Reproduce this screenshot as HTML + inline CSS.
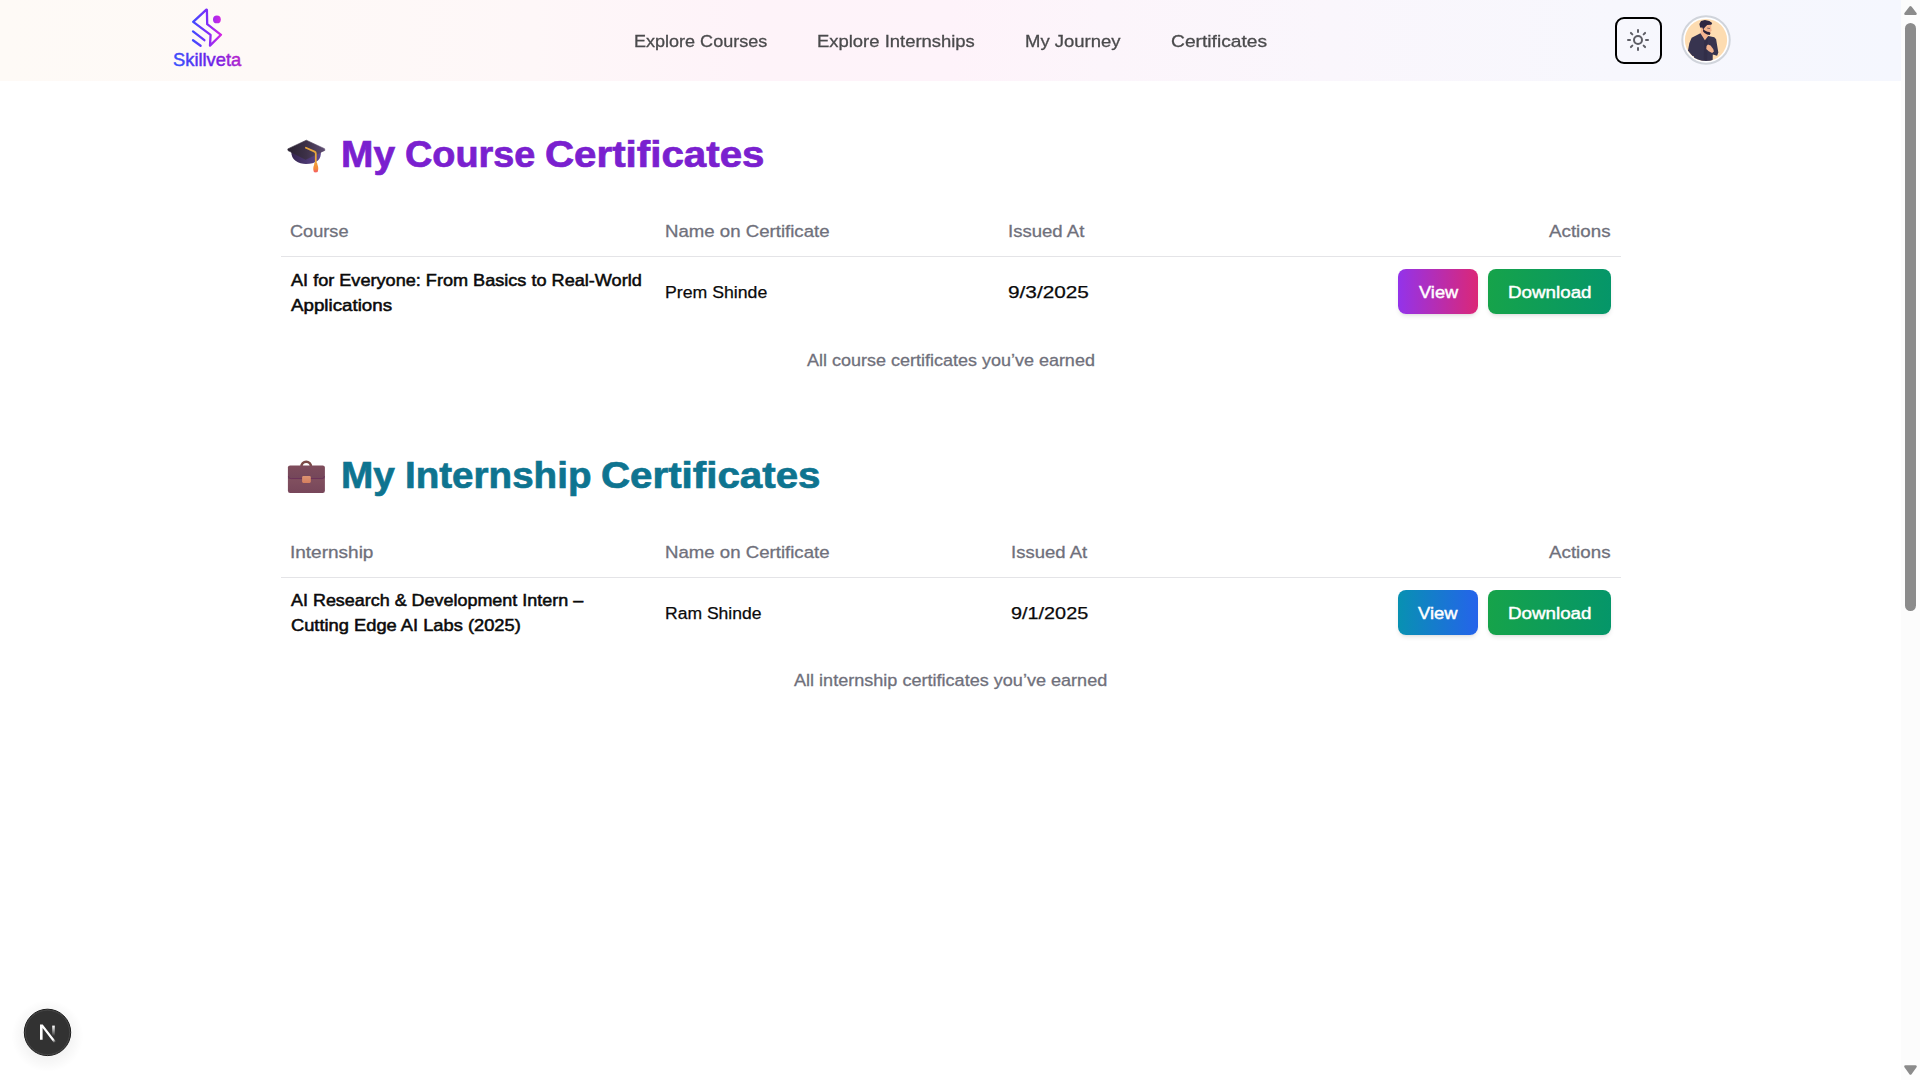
<!DOCTYPE html>
<html lang="en">
<head>
<meta charset="utf-8">
<title>Skillveta – Certificates</title>
<style>
*{box-sizing:border-box;margin:0;padding:0}
html,body{width:1920px;height:1080px;overflow:hidden;background:#fff}
body{font-family:"Liberation Sans",Arial,sans-serif;color:#0a0a0a;position:relative}
h1{font:inherit}
button{font:inherit;border:0;cursor:pointer}
.abs{position:absolute}
.t{position:absolute;white-space:nowrap;line-height:1;transform-origin:0 50%;display:block}
/* header */
#hdr{position:absolute;left:0;top:0;width:1901px;height:81px;background:linear-gradient(90deg,#fefaf6 0%,#fef9f7 14%,#fef7f8 28%,#fef3f9 40%,#fef3fa 50%,#fcf5fb 58%,#faf6fc 70%,#f7f7fd 85%,#f5f7fe 100%)}
.nav{will-change:transform;color:#4a4a4c;-webkit-text-stroke:.3px currentColor}
#theme{position:absolute;left:1615px;top:17px;width:47px;height:47px;border:2px solid #000;border-radius:9px;background:transparent}
/* headings */
.h{font-weight:700;-webkit-text-stroke:.7px currentColor}
.h1{color:#7a20cf}
.h2{color:#0e7490}
/* table */
.th{color:#6f707b;-webkit-text-stroke:.3px currentColor}
.td{color:#0a0a0a;-webkit-text-stroke:.25px currentColor}
.tdb{color:#0a0a0a;-webkit-text-stroke:.5px currentColor}
.line{position:absolute;left:281px;width:1340px;height:1px;background:#e4e4e7}
.cap{color:#6f707b;-webkit-text-stroke:.3px currentColor}
.btn{position:absolute;height:44.75px;border-radius:8px;box-shadow:0 3px 5px -1px rgba(0,0,0,.1),0 2px 3px -2px rgba(0,0,0,.09)}
.bt{color:#fff;-webkit-text-stroke:.45px currentColor}
.v1{background:linear-gradient(90deg,#9333ea,#db2777)}
.v2{background:linear-gradient(90deg,#0891b2,#2563eb)}
.dl{background:linear-gradient(90deg,#16a34a,#059669)}
#nbadge{position:absolute;left:10px;top:995px;width:80px;height:80px}
/* scrollbar */
#sb{position:absolute;left:1901px;top:0;width:19px;height:1080px;background:#fcfcfc}
#thumb{position:absolute;left:4px;top:23px;width:11px;height:588px;border-radius:5.5px;background:#8b8b8b}
</style>
</head>
<body>
<header id="hdr">

<a class="logo" aria-label="Skillveta home">
<svg class="abs" style="left:186px;top:4px" width="44" height="48" viewBox="186 4 44 48" fill="none">
  <defs>
    <linearGradient id="lg" x1="192" y1="28" x2="222" y2="28" gradientUnits="userSpaceOnUse">
      <stop offset="0" stop-color="#3b4dff"/><stop offset=".5" stop-color="#7c2dfa"/><stop offset="1" stop-color="#d926e0"/>
    </linearGradient>
  </defs>
  <path d="M206.4 9.6 L193.2 21.9 L210.6 34.9 L210 45.6 L221 34.8 L207.2 24.2 L206.9 9.8 Z" stroke="url(#lg)" stroke-width="2.3" stroke-linejoin="round" stroke-linecap="round"/>
  <path d="M193 31.4 L204.4 40.2 M193 40.2 L200.6 45.8" stroke="url(#lg)" stroke-width="2.3" stroke-linecap="round"/>
  <circle cx="216.9" cy="19.4" r="3.9" fill="url(#lg)"/>
</svg>
<svg class="t" id="brand" width="72" height="20" style="left:173.22px;top:51px;overflow:visible;transform:scaleX(1.0029)"><defs><linearGradient id="lgt" x1="0" y1="16" x2="58" y2="-12" gradientUnits="userSpaceOnUse"><stop offset="0" stop-color="#3556ff"/><stop offset=".55" stop-color="#6322ea"/><stop offset="1" stop-color="#b822cc"/></linearGradient></defs><text x="0" y="15" font-size="18.3" fill="url(#lgt)" stroke="url(#lgt)" stroke-width=".45">Skillveta</text></svg>
</a>

<nav>
<span class="t nav" id="n1" style="left:633.83px;top:33.00px;font-size:17.4px;transform:scaleX(1.0363)">Explore Courses</span>
<span class="t nav" id="n2" style="left:816.71px;top:33.00px;font-size:17.4px;transform:scaleX(1.0601)">Explore Internships</span>
<span class="t nav" id="n3" style="left:1024.91px;top:33.00px;font-size:17.4px;transform:scaleX(1.0628)">My Journey</span>
<span class="t nav" id="n4" style="left:1170.96px;top:33.00px;font-size:17.4px;transform:scaleX(1.1057)">Certificates</span>
</nav>

<button id="theme" aria-label="Toggle theme">
  <svg width="24" height="24" viewBox="0 0 24 24" fill="none" stroke="#5e5e66" stroke-width="2" stroke-linecap="round" stroke-linejoin="round" style="position:absolute;left:9px;top:9px">
    <circle cx="12" cy="12" r="4"/><path d="M12 2v2"/><path d="M12 20v2"/><path d="m4.93 4.93 1.41 1.41"/><path d="m17.66 17.66 1.41 1.41"/><path d="M2 12h2"/><path d="M20 12h2"/><path d="m6.34 17.66-1.41 1.41"/><path d="m19.07 4.93-1.41 1.41"/>
  </svg>
</button>
<svg class="abs" role="img" aria-label="User avatar" style="left:1676px;top:10px" width="60" height="60" viewBox="0 0 1080 1080">
  <defs><clipPath id="avc"><circle cx="540" cy="540" r="380"/></clipPath></defs>
  <circle cx="540" cy="540" r="427" fill="#fff" stroke="#d0d4db" stroke-width="36"/>
  <circle cx="540" cy="540" r="380" fill="#fddcb1"/>
  <g clip-path="url(#avc)">
    <path d="M450 330 L470 300 L560 280 L580 470 L520 560 L440 440 Z" fill="#f3b48f"/>
    <path d="M440 420 L520 545 L580 470 L690 490 L722 525 L762 765 L740 822 L662 800 L660 930 L320 930 L322 830 L300 832 L215 735 L240 600 L282 500 Z" fill="#37344f"/>
    <path d="M506 560 L520 545 L536 560 L572 490 L560 900 L500 900 Z" fill="#2f2c45" opacity=".6"/>
    <path d="M530 290 L565 268 L632 268 L634 330 L642 372 L622 390 L626 430 L592 446 L540 420 L500 380 L470 345 L478 310 Z" fill="#f3b48f"/>
    <path d="M486 342 L520 370 L565 390 L600 396 L620 414 L608 450 L560 442 L514 416 L488 386 Z" fill="#2b2238"/>
    <path d="M432 300 L420 250 L450 200 L520 180 L600 198 L652 236 L636 266 L562 270 L530 300 L502 332 L490 352 L470 312 L446 322 Z" fill="#2d2540"/>
    <path d="M560 318 L612 322 L610 336 L566 332 Z" fill="#2d2540" opacity=".8"/>
    <path d="M575 620 L622 640 L670 700 L682 746 L650 776 L590 742 L545 700 L550 650 Z" fill="#f3b48f"/>
  </g>
</svg>
</header>

<main>
<section>
<svg class="abs" role="img" aria-label="🎓" style="left:280px;top:132px" width="52" height="48" viewBox="280 132 52 48">
  <defs>
    <linearGradient id="gc1" x1="288" y1="0" x2="325" y2="0" gradientUnits="userSpaceOnUse"><stop offset="0" stop-color="#2a2231"/><stop offset=".5" stop-color="#3d3148"/><stop offset="1" stop-color="#5e4d72"/></linearGradient>
    <linearGradient id="gc2" x1="291" y1="0" x2="321" y2="0" gradientUnits="userSpaceOnUse"><stop offset="0" stop-color="#35254f"/><stop offset="1" stop-color="#5f4890"/></linearGradient>
    <linearGradient id="gc3" x1="0" y1="162" x2="0" y2="173" gradientUnits="userSpaceOnUse"><stop offset="0" stop-color="#f0a437"/><stop offset=".6" stop-color="#f58a3c"/><stop offset="1" stop-color="#f4526c"/></linearGradient>
  </defs>
  <path d="M291.2 151.5 C291.4 156 292.6 158.6 295.5 160.8 C298.5 163.2 302.5 163.9 306 163.9 C310.5 163.9 315 163 318 160.5 C320.4 158.4 320.9 155.5 321 151.5 Z" fill="url(#gc2)"/>
  <path d="M306.3 140.2 L324.6 148.7 L324.9 150.4 L305.6 159.4 L288 150.6 L287.8 148.9 Z" fill="url(#gc1)" stroke="url(#gc1)" stroke-width=".6" stroke-linejoin="round"/>
  <path d="M305.9 147.8 L314.6 151.6 C315.4 152 315.8 152.6 315.8 153.5 L315.8 163.5" fill="none" stroke="#e9a63c" stroke-width="1.8" stroke-linecap="round" stroke-linejoin="round"/>
  <path d="M315.7 162.4 C317.2 162.4 317.6 163.6 317.4 164.6 C318.6 167 318.4 170 317.8 171.6 C317.2 172.8 314.4 172.8 313.7 171.6 C313 169.6 313.2 166.6 314.2 164.6 C314 163.5 314.4 162.4 315.7 162.4 Z" fill="url(#gc3)"/>
</svg>
<h1><span class="t h h1" id="h1a" style="left:340.98px;top:137.00px;font-size:36.5px;transform:scaleX(1.0648)">My</span> <span class="t h h1" id="h1b" style="left:404.77px;top:137.00px;font-size:36.5px;transform:scaleX(1.0360)">Course</span> <span class="t h h1" id="h1c" style="left:544.85px;top:137.00px;font-size:36.5px;transform:scaleX(1.1038)">Certificates</span></h1>
<div class="thead"><span class="t th" id="c1" style="left:290.13px;top:223.00px;font-size:17.4px;transform:scaleX(1.0437)">Course</span><span class="t th" id="c2" style="left:665.37px;top:223.00px;font-size:17.4px;transform:scaleX(1.0705)">Name on Certificate</span><span class="t th" id="c3" style="left:1008.08px;top:223.00px;font-size:17.4px;transform:scaleX(1.0673)">Issued At</span><span class="t th" id="c4" style="left:1548.75px;top:223.00px;font-size:17.4px;transform:scaleX(1.0786)">Actions</span></div>
<div class="line" style="top:256px"></div>
<div class="trow">
<span class="t tdb" id="r1a" style="left:291.27px;top:272.00px;font-size:16.2px;transform:scaleX(1.1183)">AI for Everyone: From Basics to Real-World</span>
<span class="t tdb" id="r1b" style="left:291.24px;top:297.00px;font-size:16.2px;transform:scaleX(1.1574)">Applications</span>
<span class="t td" id="r1c" style="left:665.42px;top:284.00px;font-size:17.3px;transform:scaleX(1.0232)">Prem Shinde</span>
<span class="t td" id="r1d" style="left:1008.19px;top:284.00px;font-size:17.3px;transform:scaleX(1.2028)">9/3/2025</span>
<button class="btn v1" id="b1" style="left:1398px;top:269px;width:80px"><span class="t bt" id="bt1" style="left:21.00px;top:15.00px;font-size:17.4px;transform:scaleX(1.0499)">View</span></button>
<button class="btn dl" id="b2" style="left:1488px;top:269px;width:123px"><span class="t bt" id="bt2" style="left:19.74px;top:15.00px;font-size:17.4px;transform:scaleX(1.0800)">Download</span></button>
</div>
<span class="t cap" id="cap1" style="left:807.43px;top:352.00px;font-size:17.4px;transform:scaleX(1.0341)">All course certificates you’ve earned</span>
</section>

<section>
<svg class="abs" role="img" aria-label="💼" style="left:280px;top:452px" width="52" height="48" viewBox="280 452 52 48">
  <defs>
    <linearGradient id="gb1" x1="0" y1="465" x2="0" y2="493" gradientUnits="userSpaceOnUse"><stop offset="0" stop-color="#7f4c5b"/><stop offset=".48" stop-color="#74475a"/><stop offset=".5" stop-color="#81505f"/><stop offset="1" stop-color="#77465a"/></linearGradient>
    <linearGradient id="gb2" x1="0" y1="476" x2="0" y2="483" gradientUnits="userSpaceOnUse"><stop offset="0" stop-color="#dd9372"/><stop offset="1" stop-color="#d57f5e"/></linearGradient>
  </defs>
  <path d="M301.4 466.6 A4.8 4.8 0 0 1 311 466.6" fill="none" stroke="#7b4b47" stroke-width="2.6"/>
  <rect x="287.9" y="465.4" width="37" height="27.6" rx="2.2" fill="url(#gb1)"/>
  <path d="M288.4 476.2 C288.6 477.8 289.6 478.6 291.5 478.6 L321.3 478.6 C323.2 478.6 324.2 477.8 324.4 476.2" fill="none" stroke="#6a2f58" stroke-width=".9"/>
  <rect x="302.1" y="476.1" width="8.7" height="6.8" rx="1.3" fill="url(#gb2)"/>
</svg>
<h1><span class="t h h2" id="h2a" style="left:341.40px;top:458.00px;font-size:36.5px;transform:scaleX(1.0617)">My</span> <span class="t h h2" id="h2b" style="left:405.37px;top:458.00px;font-size:36.5px;transform:scaleX(1.0568)">Internship</span> <span class="t h h2" id="h2c" style="left:601.19px;top:458.00px;font-size:36.5px;transform:scaleX(1.1041)">Certificates</span></h1>
<div class="thead"><span class="t th" id="d1" style="left:290.01px;top:544.00px;font-size:17.4px;transform:scaleX(1.0924)">Internship</span><span class="t th" id="d2" style="left:665.49px;top:544.00px;font-size:17.4px;transform:scaleX(1.0705)">Name on Certificate</span><span class="t th" id="d3" style="left:1010.58px;top:544.00px;font-size:17.4px;transform:scaleX(1.0639)">Issued At</span><span class="t th" id="d4" style="left:1548.75px;top:544.00px;font-size:17.4px;transform:scaleX(1.0786)">Actions</span></div>
<div class="line" style="top:577px"></div>
<div class="trow">
<span class="t tdb" id="r2a" style="left:291.05px;top:592.00px;font-size:16.2px;transform:scaleX(1.1080)">AI Research &amp; Development Intern –</span>
<span class="t tdb" id="r2b" style="left:290.68px;top:617.00px;font-size:16.2px;transform:scaleX(1.1296)">Cutting Edge AI Labs (2025)</span>
<span class="t td" id="r2c" style="left:664.99px;top:605.00px;font-size:17.3px;transform:scaleX(1.0148)">Ram Shinde</span>
<span class="t td" id="r2d" style="left:1010.86px;top:605.00px;font-size:17.3px;transform:scaleX(1.1474)">9/1/2025</span>
<button class="btn v2" id="b3" style="left:1398px;top:590px;width:80px"><span class="t bt" id="bt3" style="left:20.26px;top:15.00px;font-size:17.4px;transform:scaleX(1.0544)">View</span></button>
<button class="btn dl" id="b4" style="left:1488px;top:590px;width:123px"><span class="t bt" id="bt4" style="left:19.54px;top:15.00px;font-size:17.4px;transform:scaleX(1.0794)">Download</span></button>
</div>
<span class="t cap" id="cap2" style="left:794.35px;top:672.00px;font-size:17.4px;transform:scaleX(1.0386)">All internship certificates you’ve earned</span>
</section>
</main>

<div id="nbadge" aria-label="Next.js dev tools">
  <svg width="80" height="80" viewBox="10 995 80 80" style="position:absolute;left:0;top:0">
    <defs>
      <radialGradient id="nsh" cx="47.5" cy="1036" r="36" gradientUnits="userSpaceOnUse"><stop offset=".6" stop-color="#000" stop-opacity=".045"/><stop offset="1" stop-color="#000" stop-opacity="0"/></radialGradient>
      <linearGradient id="ng1" x1="0" y1="1026" x2="0" y2="1036" gradientUnits="userSpaceOnUse"><stop offset="0" stop-color="#fff"/><stop offset="1" stop-color="#fff" stop-opacity="0"/></linearGradient>
      <linearGradient id="ng2" x1="48" y1="1033" x2="55.3" y2="1042.3" gradientUnits="userSpaceOnUse"><stop offset="0" stop-color="#fff"/><stop offset=".7" stop-color="#fff"/><stop offset="1" stop-color="#fff" stop-opacity="0"/></linearGradient>
    </defs>
    <circle cx="47.5" cy="1036" r="36" fill="url(#nsh)"/>
    <circle cx="47.5" cy="1032.4" r="23.2" fill="#323232" stroke="#1c1c1c" stroke-width="1"/>
    <circle cx="47.5" cy="1032.4" r="22.2" fill="none" stroke="#4a4a4a" stroke-width=".8"/>
    <path d="M40 1024.4 H42.7 L55.9 1041.5 L54.1 1042.9 L42.6 1028 V1039.8 H40 Z" fill="url(#ng2)"/>
    <path d="M52.2 1025.6 H54.8 V1036 H52.2 Z" fill="url(#ng1)"/>
  </svg>
</div>
<!-- scrollbar -->
<div id="sb">
  <svg width="19" height="1080" style="position:absolute;left:0;top:0" fill="#8b8b8b" stroke="#8b8b8b" stroke-width="2.6" stroke-linejoin="round">
    <path d="M9.5 7.4 L14.5 13.7 L4.5 13.7 Z"/>
    <path d="M9.5 1073.4 L14.5 1066.6 L4.5 1066.6 Z"/>
  </svg>
  <div id="thumb"></div>
</div>
</body>
</html>
